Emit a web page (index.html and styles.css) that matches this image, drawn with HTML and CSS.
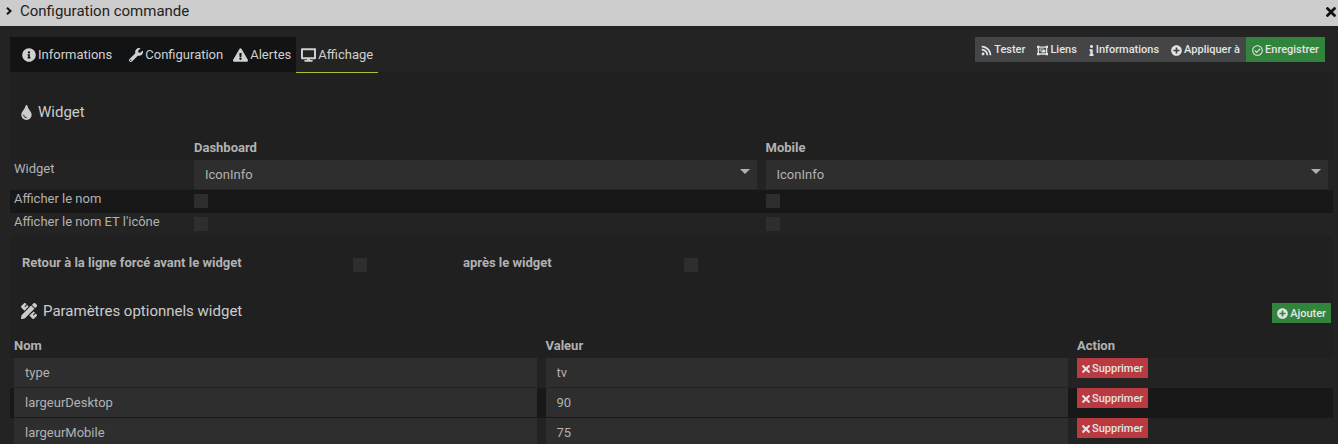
FILE: index.html
```html
<!DOCTYPE html>
<html lang="fr">
<head>
<meta charset="utf-8">
<title>Configuration commande</title>
<link rel="stylesheet" href="styles.css">
</head>
<body>
<svg class="sprite" aria-hidden="true">
  <symbol id="i-info-circle" viewBox="0 0 512 512"><path d="M256 8C119 8 8 119 8 256s111 248 248 248 248-111 248-248S393 8 256 8zm0 110c23.200 0 42 18.800 42 42s-18.800 42-42 42-42-18.800-42-42 18.800-42 42-42zm56 254c0 6.600-5.400 12-12 12h-88c-6.600 0-12-5.400-12-12v-24c0-6.600 5.400-12 12-12h12v-64h-12c-6.600 0-12-5.400-12-12v-24c0-6.600 5.400-12 12-12h64c6.600 0 12 5.400 12 12v100h12c6.600 0 12 5.400 12 12v24z"/></symbol>
  <symbol id="i-wrench" viewBox="0 0 512 512"><path d="M507.700 109.100c-2.200-9-13.500-12.100-20.100-5.500l-74.400 74.400-67.900-11.300L334 98.900l74.400-74.400c6.600-6.600 3.400-17.900-5.700-20.200-47.400-11.700-99.600.9-136.600 37.900-39.600 39.600-50.600 97.100-34.100 147.200L18.700 402.800c-25 25-25 65.500 0 90.500s65.500 25 90.500 0l213.200-213.200c50.100 16.700 107.500 5.700 147.400-34.200 37.100-37.100 49.700-89.300 37.900-136.800zM64 472c-13.200 0-24-10.800-24-24s10.700-24 24-24 24 10.700 24 24-10.800 24-24 24z"/></symbol>
  <symbol id="i-warning" viewBox="0 0 576 512"><path d="M569.500 440c18.500 32-4.700 72-41.600 72H48.100c-36.900 0-60-40.100-41.500-72L246.400 24c18.500-32 64.700-32 83.200 0l239.900 416zM288 354c-25.400 0-46 20.600-46 46s20.600 46 46 46 46-20.600 46-46-20.600-46-46-46zm-43.700-165.300l7.400 136c.4 6.400 5.600 11.300 12 11.300h48.500c6.400 0 11.600-5 12-11.300l7.400-136c.4-6.900-5.100-12.700-12-12.700h-63.400c-6.900 0-12.300 5.800-11.900 12.700z"/></symbol>
  <symbol id="i-desktop" viewBox="0 0 576 512"><path d="M528 0H48C21.500 0 0 21.500 0 48v320c0 26.500 21.500 48 48 48h192l-16 32h-72c-13.300 0-32 10.700-32 32s18.700 32 32 32h272c13.300 0 32-10.700 32-32s-18.700-32-32-32h-72l-16-32h208c26.500 0 48-21.500 48-48V48c0-26.500-21.500-48-48-48zm-28 340H76V76h424v264z"/></symbol>
  <symbol id="i-tint" viewBox="0 0 352 512"><path d="M205.200 22.100C196.800-6.300 156.500-8.500 146.800 22.100 100 179.900 0 222.700 0 333.900 0 432.400 78.700 512 176 512s176-79.600 176-178.100c0-111.800-99.800-153.300-146.800-311.800zM176 448c-61.800 0-112-50.300-112-112 0-8.800 7.200-16 16-16s16 7.200 16 16c0 44.100 35.900 80 80 80 8.800 0 16 7.200 16 16s-7.200 16-16 16z"/></symbol>
  <symbol id="i-rss" viewBox="0 0 448 512"><path d="M128 416c0 35.300-28.700 64-64 64S0 451.300 0 416s28.700-64 64-64 64 28.700 64 64zm175.700 47.300C295.300 309.900 172.200 185.100 16.700 176.300 7.600 175.800 0 183.100 0 192.300v48.100c0 8.400 6.500 15.500 14.900 16 111.800 7.300 201.500 96.700 208.800 208.800.5 8.400 7.600 14.900 16 14.900h48.100c9.200 0 16.500-7.600 15.900-16.800zm144.200.3C439.600 229.700 251.500 40.400 16.500 32 7.500 31.700 0 39 0 48v48.100c0 8.600 6.800 15.600 15.500 16 191.200 7.800 344.600 161.300 352.500 352.500.4 8.600 7.400 15.500 16 15.500h48.100c9.100-.1 16.300-7.500 15.900-16.500z"/></symbol>
  <symbol id="i-group" viewBox="0 0 512 512"><path fill-rule="evenodd" d="M0 32h112v32h288V32h112v112h-32v224h32v112H400v-32H112v32H0V368h32V144H0V32zm96 96v256h320V128H96zm32 32h176v64h80v128H208v-64h-80V160zm32 32v64h112v-64H160z"/></symbol>
  <symbol id="i-info" viewBox="0 0 192 512"><path d="M20 424.200h20V279.800H20c-11 0-20-9-20-20V212c0-11 9-20 20-20h112c11 0 20 9 20 20v212.200h20c11 0 20 9 20 20V492c0 11-9 20-20 20H20c-11 0-20-9-20-20v-47.800c0-11 9-20 20-20zM96 0C56.200 0 24 32.200 24 72s32.200 72 72 72 72-32.200 72-72S135.800 0 96 0z"/></symbol>
  <symbol id="i-plus" viewBox="0 0 512 512"><path d="M256 8C119 8 8 119 8 256s111 248 248 248 248-111 248-248S393 8 256 8zm144 276c0 6.600-5.400 12-12 12h-92v92c0 6.600-5.400 12-12 12h-56c-6.600 0-12-5.400-12-12v-92h-92c-6.600 0-12-5.400-12-12v-56c0-6.600 5.400-12 12-12h92v-92c0-6.600 5.400-12 12-12h56c6.600 0 12 5.400 12 12v92h92c6.600 0 12 5.400 12 12v56z"/></symbol>
  <symbol id="i-check" viewBox="0 0 512 512"><path d="M256 8C119 8 8 119 8 256s111 248 248 248 248-111 248-248S393 8 256 8zm0 48c110.500 0 200 89.500 200 200s-89.500 200-200 200S56 366.500 56 256 145.500 56 256 56m140.200 130.300l-22.500-22.700c-4.700-4.700-12.300-4.700-17-.1L215.300 303.700l-59.800-60.300c-4.700-4.700-12.300-4.700-17-.1l-22.700 22.500c-4.700 4.700-4.700 12.300-.1 17l90.800 91.500c4.700 4.700 12.300 4.700 17 .1l172.600-171.200c4.700-4.700 4.700-12.300.1-17z"/></symbol>
  <symbol id="i-times" viewBox="0 0 352 352"><path d="M242.700 176l100.100-100.100c12.300-12.300 12.300-32.200 0-44.500L320.600 9.200c-12.300-12.300-32.200-12.300-44.500 0L176 109.300 75.900 9.200C63.600-3.100 43.700-3.100 31.400 9.200L9.200 31.400c-12.300 12.300-12.300 32.200 0 44.500L109.300 176 9.200 276.100c-12.300 12.300-12.300 32.200 0 44.500l22.200 22.200c12.300 12.300 32.200 12.300 44.500 0L176 242.700l100.100 100.100c12.300 12.300 32.200 12.300 44.500 0l22.200-22.200c12.300-12.300 12.300-32.200 0-44.500L242.700 176z"/></symbol>
  <symbol id="i-pencil-ruler" viewBox="0 0 512 512"><path d="M109.500 244l134.600-134.400-44.100-44.100-61.700 61.700a8 8 0 0 1-11.300 0l-11.300-11.300a8 8 0 0 1 0-11.300l61.700-61.700-33-33C131.400-3 111.500-3 99.200 9.200L9.200 99.200c-12.300 12.300-12.300 32.100 0 44.400zm388.500-127.200c18.700-18.700 18.700-49 0-67.700L462.900 14c-18.700-18.700-49-18.700-67.800 0l-46.700 46.700 103 102.900zM325.600 83.400L17.200 391.700.3 485.900a22.400 22.400 0 0 0 25.900 25.800l94.100-17 308.300-308.300zm177.200 285l-33-33-61.700 61.700a8 8 0 0 1-11.300 0l-11.300-11.300a8 8 0 0 1 0-11.300l61.700-61.700-44.200-44.200L268 402.400l100.400 100.400c12.200 12.300 32.100 12.300 44.400 0l90-90c12.200-12.300 12.200-32.200 0-44.400z"/></symbol>
</svg>

<header class="titlebar">
  <svg class="chevron" viewBox="0 0 6 8" aria-hidden="true"><path d="M1 .8 4.500 4 1 7.200"/></svg>
  <h1 class="title">Configuration commande</h1>
  <button class="close" type="button" aria-label="Fermer"><svg class="icon icon-close"><use href="#i-times"/></svg></button>
</header>

<main class="content">
  <div class="topbar">
    <nav class="tabs">
      <a class="tab tab-first" href="#informations"><svg class="icon"><use href="#i-info-circle"/></svg>Informations</a>
      <a class="tab" href="#configuration"><svg class="icon"><use href="#i-wrench"/></svg>Configuration</a>
      <a class="tab" href="#alertes"><svg class="icon icon-wide"><use href="#i-warning"/></svg>Alertes</a>
      <a class="tab tab-active" href="#affichage" aria-current="page"><svg class="icon icon-wide"><use href="#i-desktop"/></svg>Affichage</a>
    </nav>
    <div class="toolbar">
      <button class="btn" type="button"><svg class="icon icon-sm"><use href="#i-rss"/></svg>Tester</button>
      <button class="btn" type="button"><svg class="icon icon-sm"><use href="#i-group"/></svg>Liens</button>
      <button class="btn" type="button"><svg class="icon icon-thin"><use href="#i-info"/></svg>Informations</button>
      <button class="btn" type="button"><svg class="icon icon-sm"><use href="#i-plus"/></svg>Appliquer à</button>
      <button class="btn btn-success" type="button"><svg class="icon icon-sm"><use href="#i-check"/></svg>Enregistrer</button>
    </div>
  </div>

  <section class="panel" id="affichage">
    <h2 class="legend"><svg class="icon icon-tint"><use href="#i-tint"/></svg>Widget</h2>
    <table class="table">
      <colgroup><col class="col-label"><col><col></colgroup>
      <thead><tr><td></td><th scope="col">Dashboard</th><th scope="col">Mobile</th></tr></thead>
      <tbody>
        <tr>
          <td>Widget</td>
          <td><div class="select-wrap"><select class="field" aria-label="Widget dashboard"><option>IconInfo</option></select></div></td>
          <td><div class="select-wrap"><select class="field" aria-label="Widget mobile"><option>IconInfo</option></select></div></td>
        </tr>
        <tr class="check-row">
          <td>Afficher le nom</td>
          <td><input class="check" type="checkbox" aria-label="Afficher le nom, dashboard"></td>
          <td><input class="check" type="checkbox" aria-label="Afficher le nom, mobile"></td>
        </tr>
        <tr class="check-row">
          <td>Afficher le nom ET l'icône</td>
          <td><input class="check" type="checkbox" aria-label="Afficher le nom et l'icône, dashboard"></td>
          <td><input class="check" type="checkbox" aria-label="Afficher le nom et l'icône, mobile"></td>
        </tr>
      </tbody>
    </table>

    <div class="form-row">
      <label for="before">Retour à la ligne forcé avant le widget</label>
      <input class="check" type="checkbox" id="before">
      <label for="after">après le widget</label>
      <input class="check" type="checkbox" id="after">
    </div>

    <div class="section-head">
      <h2 class="legend"><svg class="icon icon-ruler"><use href="#i-pencil-ruler"/></svg>Paramètres optionnels widget</h2>
      <button class="btn btn-success btn-xs" type="button"><svg class="icon icon-sm"><use href="#i-plus"/></svg>Ajouter</button>
    </div>
    <table class="table table-params">
      <colgroup><col><col><col class="col-action"></colgroup>
      <thead><tr><th scope="col">Nom</th><th scope="col">Valeur</th><th scope="col">Action</th></tr></thead>
      <tbody>
        <tr>
          <td><input class="field" type="text" value="type" aria-label="Nom"></td>
          <td><input class="field" type="text" value="tv" aria-label="Valeur"></td>
          <td><button class="btn btn-danger btn-xs" type="button"><svg class="icon icon-times"><use href="#i-times"/></svg>Supprimer</button></td>
        </tr>
        <tr>
          <td><input class="field" type="text" value="largeurDesktop" aria-label="Nom"></td>
          <td><input class="field" type="text" value="90" aria-label="Valeur"></td>
          <td><button class="btn btn-danger btn-xs" type="button"><svg class="icon icon-times"><use href="#i-times"/></svg>Supprimer</button></td>
        </tr>
        <tr>
          <td><input class="field" type="text" value="largeurMobile" aria-label="Nom"></td>
          <td><input class="field" type="text" value="75" aria-label="Valeur"></td>
          <td><button class="btn btn-danger btn-xs" type="button"><svg class="icon icon-times"><use href="#i-times"/></svg>Supprimer</button></td>
        </tr>
      </tbody>
    </table>
  </section>
</main>
</body>
</html>
```

FILE: styles.css
```css
* {
  box-sizing: border-box;
}

body {
  margin: 0;
  height: 100vh;
  display: flex;
  flex-direction: column;
  overflow: hidden;
  background: #232323;
  color: #b2b2b2;
  font: 13px/18px Roboto, "Liberation Sans", sans-serif;
}

button,
input,
select {
  font: inherit;
  color: inherit;
  margin: 0;
  border: 0;
  border-radius: 0;
}

.sprite {
  display: none;
}

.icon {
  width: 14px;
  height: 14px;
  flex: none;
  fill: currentColor;
}

.icon-wide {
  width: 15px;
}

.icon-sm {
  width: 11px;
  height: 11px;
}

.icon-thin {
  width: 5px;
  height: 11px;
}

.icon-times {
  width: 8px;
  height: 8px;
}

.icon-close {
  width: 10px;
  height: 10px;
}

.icon-tint {
  width: 11px;
  height: 15px;
}

.icon-ruler {
  width: 16px;
  height: 16px;
}

.titlebar {
  display: flex;
  flex: none;
  align-items: center;
  height: 26px;
  padding: 0 2px 2px 6px;
  gap: 8px;
  background: #cdcdcd;
  color: #222;
}

.chevron {
  width: 6px;
  height: 8px;
  margin-bottom: 2px;
  fill: none;
  stroke: #111;
  stroke-width: 2;
}

.title {
  flex: 1;
  margin: 0 0 2px;
  font-size: 15px;
  font-weight: 400;
}

.close {
  display: flex;
  padding: 0;
  background: none;
  color: #111;
}

.content {
  flex: 1;
  min-height: 0;
  overflow: hidden;
  padding: 11px 5px 0 10px;
}

.topbar {
  display: flex;
  justify-content: space-between;
  align-items: flex-start;
  padding-right: 8px;
}

.tabs {
  display: flex;
  background: #121314;
}

.tab {
  display: flex;
  align-items: center;
  gap: 2px;
  height: 35px;
  padding: 0 5px;
  color: #d0d0d0;
  text-decoration: none;
}

.tab-first {
  padding: 0 12px;
}

.tab-active {
  height: 36px;
  margin-bottom: -1px;
  background: #232323;
  border-bottom: 1px solid #a6c038;
}

.toolbar {
  display: flex;
}

.btn {
  display: inline-flex;
  align-items: center;
  gap: 2px;
  height: 25px;
  padding: 1px 6px 0;
  background: #434546;
  color: #e4e4e4;
  font-size: 11px;
  font-weight: 500;
  white-space: nowrap;
}

.btn-success {
  background: #32843c;
}

.btn-danger {
  background: #b93a40;
}

.btn-xs {
  height: 20px;
  padding: 1px 5px 0;
}

.panel {
  padding-top: 30px;
  background: #202020;
}

.legend {
  display: flex;
  align-items: center;
  gap: 6px;
  margin: 0;
  padding-left: 11px;
  height: 20px;
  color: #ccc;
  font-size: 15px;
  font-weight: 400;
}

.table {
  width: 100%;
  margin-top: 16px;
  table-layout: fixed;
  border-collapse: collapse;
}

.table-params {
  margin-top: 13px;
}

.col-label {
  width: 180px;
}

.col-action {
  width: 260px;
}

.table th,
.table td {
  padding: 0 5px 0 4px;
  text-align: left;
  vertical-align: top;
}

.table th {
  height: 22px;
  padding-top: 1px;
  font-weight: 700;
}

.table tbody tr {
  height: 30px;
  background: #232323;
}

.table tbody tr:nth-child(even) {
  background: #181818;
}

.table tbody .check-row {
  height: 23px;
}

.table tbody .check-row:last-child {
  background: #232323;
}

.select-wrap {
  display: grid;
}

.select-wrap::after {
  content: "";
  grid-area: 1 / 1;
  align-self: start;
  justify-self: end;
  margin: 9px 7px 0 0;
  border: 5px solid transparent;
  border-top-color: #b2b2b2;
  border-bottom: 0;
  pointer-events: none;
}

.field {
  display: block;
  width: 100%;
  height: 29px;
  padding: 0 11px;
  background: #2e2e2e;
  appearance: none;
}

.select-wrap .field {
  grid-area: 1 / 1;
}

.check {
  display: block;
  width: 14px;
  height: 14px;
  margin-top: 4px;
  background: #2e2e2e;
  appearance: none;
}

.form-row {
  display: grid;
  grid-template-columns: 3fr 1fr 2fr 6fr;
  margin: 18px -12px 0 12px;
  font-weight: 700;
}

.section-head {
  display: flex;
  align-items: center;
  justify-content: space-between;
  margin-top: 27px;
  padding-right: 2px;
}

.section-head .btn {
  margin-top: 4px;
}
```
